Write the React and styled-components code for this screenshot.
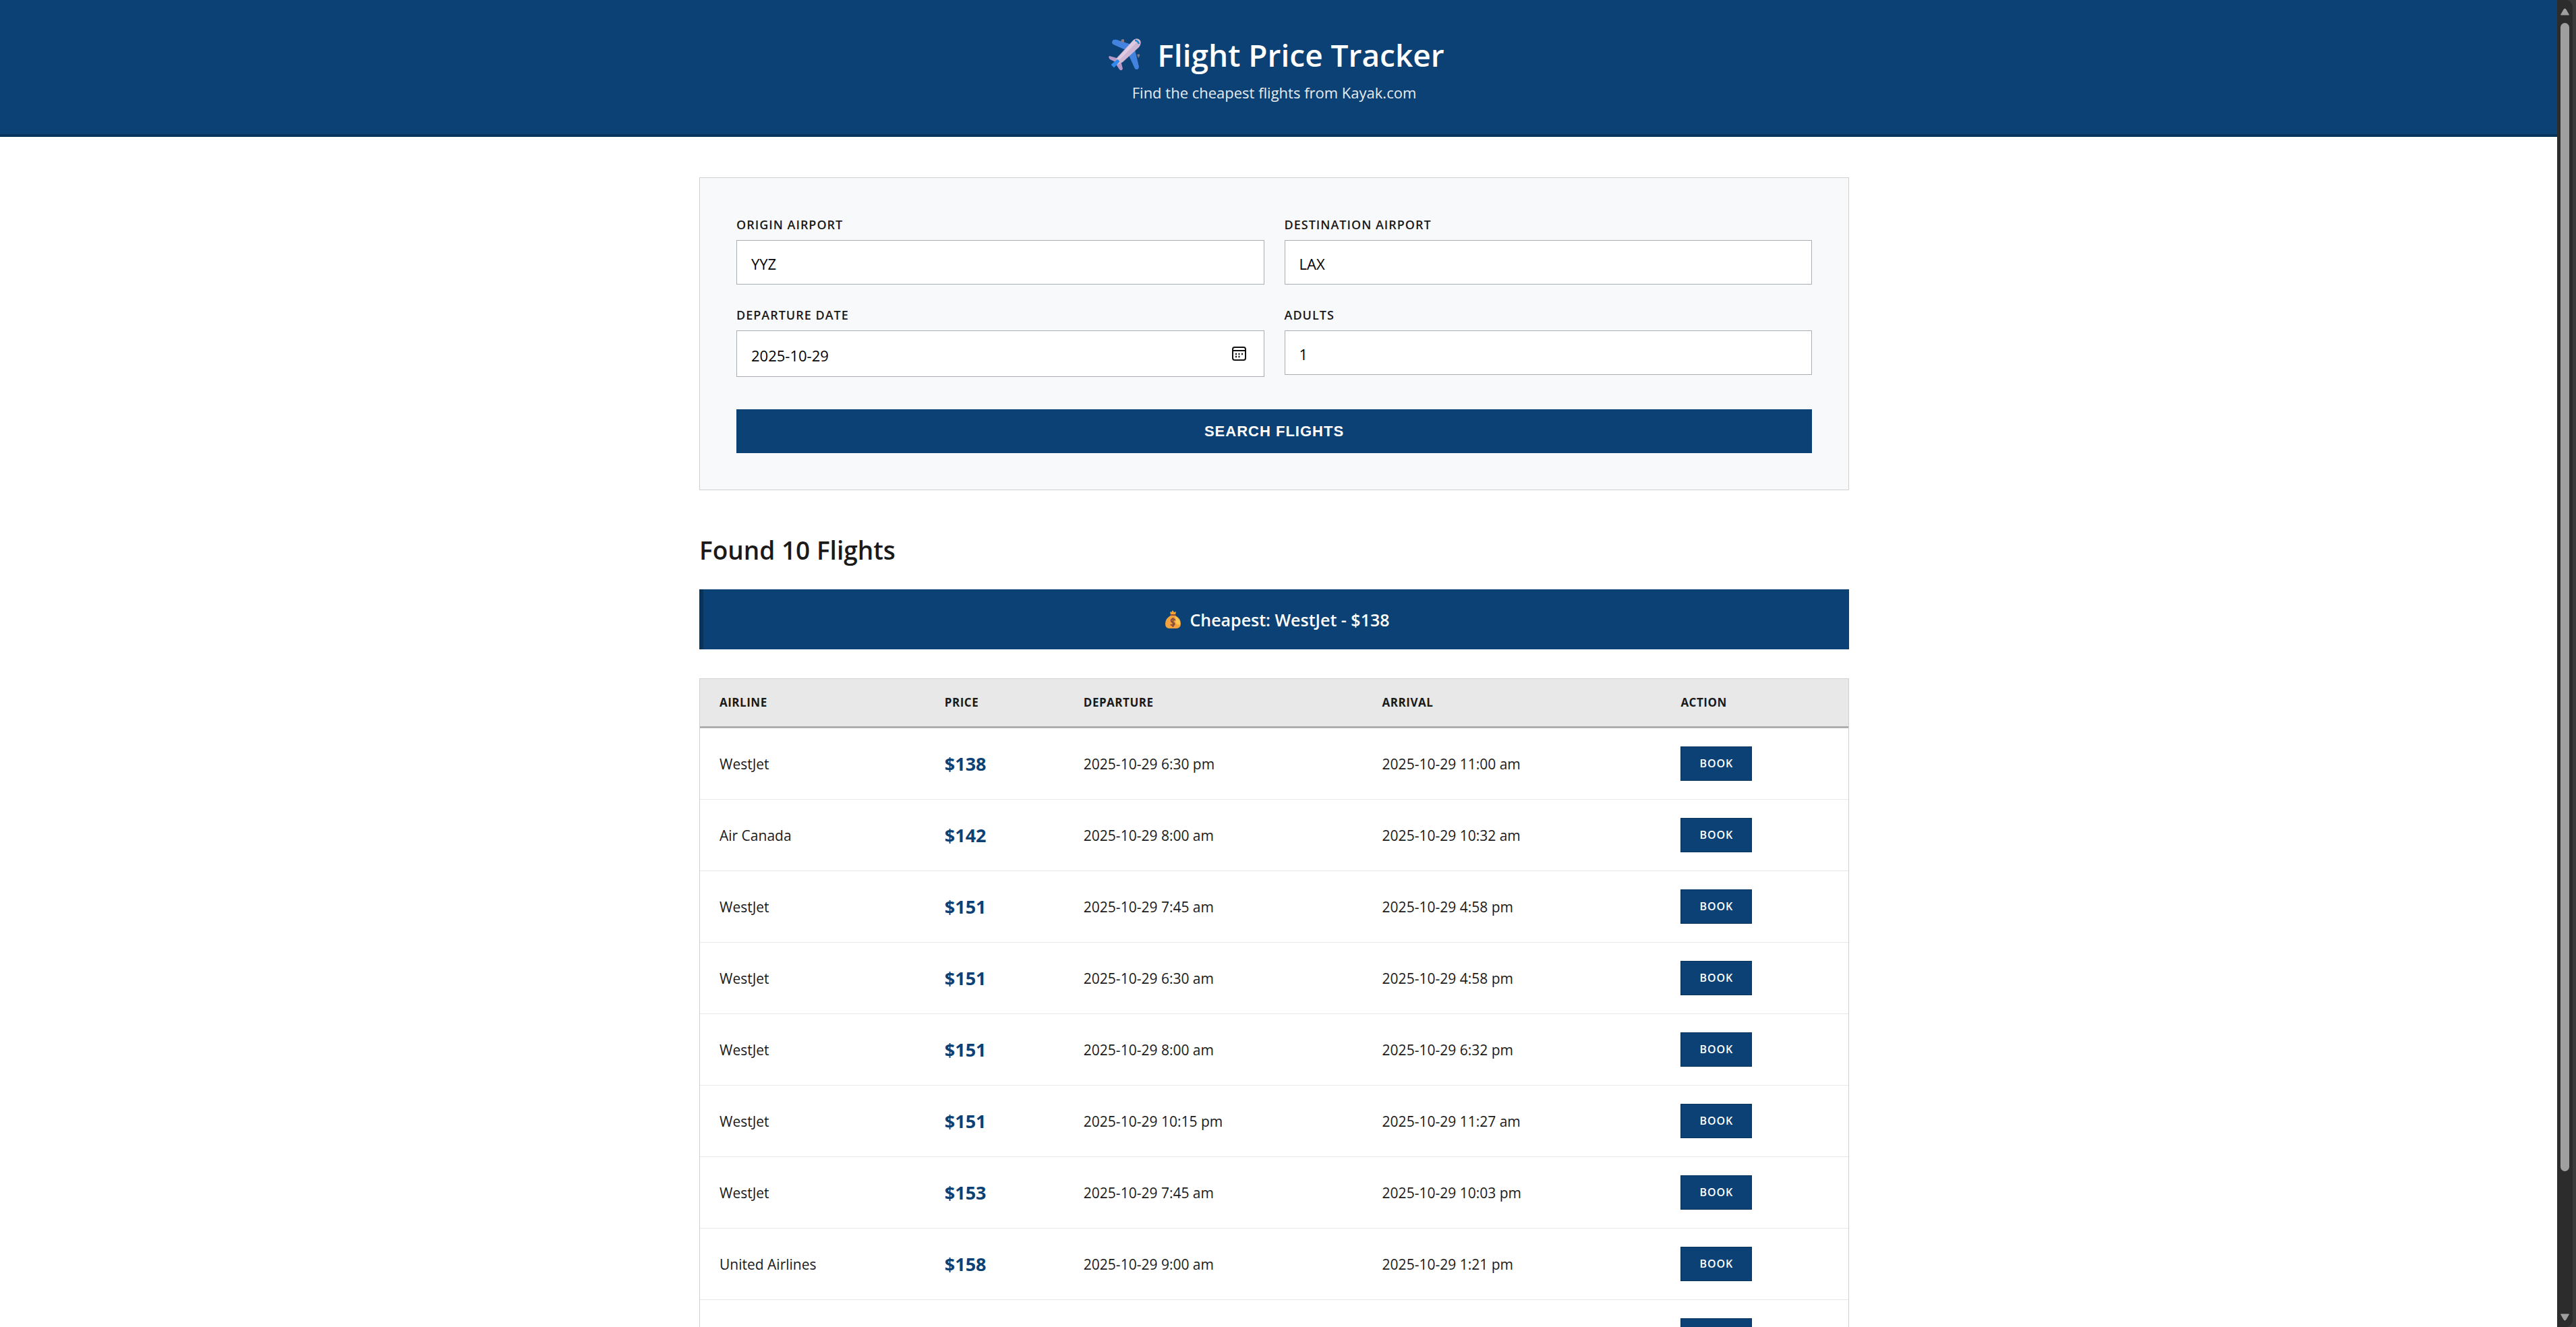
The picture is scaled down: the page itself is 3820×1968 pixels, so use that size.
import React, { useState } from "react";
import styled, { createGlobalStyle } from "styled-components";

const sans = '"Open Sans", "Noto Sans", sans-serif';
const navy = "#0b4174";
const navyDark = "#07345a";

const GlobalStyle = createGlobalStyle`
  *, *::before, *::after { box-sizing: border-box; }
  body { margin: 0; background: #fff; color: #1a1a1a; font-family: ${sans}; font-size: 21px; line-height: 32px; }
`;

const Shell = styled.div`
  display: flex;
  height: 100vh;
  overflow: hidden;
`;

const Page = styled.div`
  flex: 1;
  min-width: 0;
  height: 100%;
  overflow-y: auto;
  scrollbar-width: none;
`;

const Header = styled.header`
  padding: 45px 13px 50px 0;
  background: ${navy};
  border-bottom: 4px solid ${navyDark};
  color: #fff;
  text-align: center;
`;

const Title = styled.h1`
  display: flex;
  align-items: center;
  justify-content: center;
  gap: 23px;
  margin: 0 0 8px;
  font-size: 46px;
  line-height: 72px;
  font-weight: 600;
`;

const Tagline = styled.p`
  margin: 0;
  font-size: 22px;
  line-height: 24px;
  opacity: 0.9;
`;

const Content = styled.main`
  padding: 60px 13px 60px 0;
`;

const Container = styled.div`
  width: 100%;
  max-width: 1705px;
  margin: 0 auto;
`;

const SearchCard = styled.form`
  padding: 54px;
  background: #f8f9fb;
  border: 1px solid #d0d0d0;
`;

const FieldGrid = styled.div`
  display: grid;
  grid-template-columns: 1fr 1fr;
  gap: 30px;
  align-items: start;
  margin-bottom: 48px;
`;

const Label = styled.label`
  display: block;
  margin-bottom: 8px;
  font-size: 18px;
  line-height: 30px;
  font-weight: 600;
  letter-spacing: 1px;
  text-transform: uppercase;
`;

const InputBox = styled.div`
  display: flex;
  align-items: center;
  height: ${(p) => (p.$tall ? 69 : 66)}px;
  padding-right: 24px;
  background: #fff;
  border: 1px solid #aaadb1;
`;

const Input = styled.input`
  flex: 1;
  min-width: 0;
  height: 100%;
  padding: 4px 0 0 21px;
  border: 0;
  outline: 0;
  background: transparent;
  color: #000;
  font-family: ${sans};
  font-size: 22px;
`;

const PickerButton = styled.button`
  display: flex;
  padding: 2px;
  border: 0;
  background: none;
`;

const SearchButton = styled.button`
  display: block;
  width: 100%;
  height: 65px;
  border: 0;
  background: ${navy};
  color: #fff;
  font-family: "Liberation Sans", Arial, sans-serif;
  font-size: 22px;
  font-weight: 700;
  letter-spacing: 1px;
  text-transform: uppercase;
`;

const ResultsTitle = styled.h2`
  margin: 60px 0 30px;
  font-size: 37px;
  line-height: 57px;
  font-weight: 600;
`;

const Banner = styled.div`
  display: flex;
  align-items: center;
  justify-content: center;
  gap: 12px;
  height: 89px;
  margin-bottom: 43px;
  background: ${navy};
  border-left: 6px solid ${navyDark};
  color: #fff;
  font-size: 25px;
  font-weight: 600;
`;

const Table = styled.table`
  width: 100%;
  table-layout: fixed;
  border-spacing: 0;
  border: 1px solid #d0d0d0;
`;

const Col = styled.col`
  width: ${(p) => p.$share}%;
`;

const HeadCell = styled.th`
  height: 73px;
  padding: 0 29px;
  background: #e8e8e8;
  border-bottom: 3px solid #aeaeae;
  font-size: 17px;
  font-weight: 700;
  letter-spacing: 0.5px;
  text-align: left;
  text-transform: uppercase;
`;

const Cell = styled.td`
  height: 106px;
  padding: 0 29px;
  border-bottom: 1px solid #e8e8e8;
`;

const PriceCell = styled(Cell)`
  color: ${navy};
  font-size: 27px;
  font-weight: 700;
`;

const BookLink = styled.a`
  display: inline-block;
  padding: 0 27px;
  border: 1px solid ${navyDark};
  background: ${navy};
  color: #fff;
  font-size: 16px;
  line-height: 49px;
  font-weight: 600;
  letter-spacing: 1px;
  text-decoration: none;
  text-transform: uppercase;
  vertical-align: middle;
`;

const ScrollRail = styled.div`
  display: flex;
  flex: none;
  width: 28px;
  padding-right: 5px;
  background: #3b3b3b;
`;

const ScrollTrack = styled.div`
  display: flex;
  flex: 1;
  flex-direction: column;
  align-items: center;
  gap: 11px;
  padding: 12px 0 9px;
  border-radius: 0 10px 10px 0;
  background: #2c2c2c;
`;

const ScrollRoom = styled.div`
  display: flex;
  flex: 1;
  flex-direction: column;
`;

const Thumb = styled.div`
  flex: 0 0 89.5%;
  width: 13px;
  border-radius: 7px;
  background: #9f9f9f;
`;

const PlaneIcon = () => (
  <svg width="56" height="50" viewBox="-6 0 56 50" aria-hidden="true">
    <path d="M8 3 Q12 2 16 4 L38 11 L26 18 L8 10 Q4 7 8 3Z" fill="#4382de" />
    <path d="M39 14 L43 30 L46 43 Q45 49 40 46 L30 24Z" fill="#4382de" />
    <path d="M20 3 Q22 1 24 3 L24 7 L19 6Z M43 25 Q48 23 47 27 L45 30Z" fill="#887a80" />
    <path d="M13 30 L2 27 Q0 29 3 32 L11 36Z M15 36 L20 38 L22 46 Q20 50 17 47 L11 38Z" fill="#b898c8" />
    <path d="M38 3 Q44 -1 48 4 Q50 9 46 14 L22 36 Q15 41 11 39 Q9 36 13 30Z" fill="#cdb7d5" />
    <path d="M38 4 Q42 2 44 5 L20 30 Q14 34 13 32Z" fill="#decbe1" />
    <path d="M40 4 Q44 4 46 9" fill="none" stroke="#1b87cb" strokeWidth="2.500" />
    <path d="M6 40 L14 33 L16 35 L9 43Z" fill="#2f8bf0" stroke="#2f8bf0" strokeWidth="2" strokeLinejoin="round" />
  </svg>
);

const MoneyBagIcon = () => (
  <svg width="28" height="28" viewBox="-2 0 28 28" aria-hidden="true">
    <path d="M9 2 L11 3 L13 0 L15 3 L18 2 L17 7 L10 7Z" fill="#f3a435" />
    <path d="M10 6 H17 L18 9 H9Z" fill="#8c5142" />
    <path d="M10 8 H17 Q25 12 25 20 Q25 27 18 27 H8 Q2 27 2 20 Q2 12 10 8Z" fill="#f2a33d" />
    <path d="M17 9 Q25 13 24 21 Q20 23 17 18Z" fill="#fbc951" />
    <path d="M17 15 Q13 11 11 14 Q10 17 13 18 Q17 19 15 22 Q13 24 10 21 M13.500 11 V25" fill="none" stroke="#8a4d3f" strokeWidth="2" />
  </svg>
);

const CalendarIcon = () => (
  <svg width="21" height="21" viewBox="0 0 21 21" fill="none" stroke="#111" strokeWidth="2" aria-hidden="true">
    <rect x="1" y="1" width="19" height="19" rx="3" />
    <path d="M1 6 H20" />
    <path d="M5 11 h2 M9.500 11 h2 M14 11 h2 M5 15 h2 M9.500 15 h2" strokeWidth="2.500" />
  </svg>
);

const Arrow = ({ down }) => (
  <svg width="15" height="11" viewBox="0 0 15 11" aria-hidden="true">
    <path
      d={down ? "M1.500 1 H13.500 L9 9 Q7.500 11 6 9Z" : "M1.500 10 H13.500 L9 2 Q7.500 0 6 2Z"}
      fill="#9f9f9f" stroke="#9f9f9f" strokeLinejoin="round"
    />
  </svg>
);

const columns = [
  ["Airline", 19.6],
  ["Price", 12.1],
  ["Departure", 26],
  ["Arrival", 26],
  ["Action", 16.3],
];

const flights = [
  ["WestJet", 138, "6:30 pm", "11:00 am"],
  ["Air Canada", 142, "8:00 am", "10:32 am"],
  ["WestJet", 151, "7:45 am", "4:58 pm"],
  ["WestJet", 151, "6:30 am", "4:58 pm"],
  ["WestJet", 151, "8:00 am", "6:32 pm"],
  ["WestJet", 151, "10:15 pm", "11:27 am"],
  ["WestJet", 153, "7:45 am", "10:03 pm"],
  ["United Airlines", 158, "9:00 am", "1:21 pm"],
  ["United Airlines", 158, "10:00 am", "2:40 pm"],
  ["Air Canada", 162, "11:30 am", "1:55 pm"],
];

const fields = [
  { id: "origin", label: "Origin Airport" },
  { id: "destination", label: "Destination Airport" },
  { id: "date", label: "Departure Date", picker: true },
  { id: "adults", label: "Adults" },
];

export default function App() {
  const [query, setQuery] = useState({
    origin: "YYZ",
    destination: "LAX",
    date: "2025-10-29",
    adults: "1",
  });

  return (
    <Shell>
      <GlobalStyle />
      <Page>
        <Header>
          <Title><PlaneIcon />Flight Price Tracker</Title>
          <Tagline>Find the cheapest flights from Kayak.com</Tagline>
        </Header>
        <Content>
          <Container>
            <SearchCard onSubmit={(e) => e.preventDefault()}>
              <FieldGrid>
                {fields.map(({ id, label, picker }) => (
                  <div key={id}>
                    <Label htmlFor={id}>{label}</Label>
                    <InputBox $tall={picker}>
                      <Input
                        id={id}
                        value={query[id]}
                        onChange={(e) => setQuery({ ...query, [id]: e.target.value })}
                      />
                      {picker && (
                        <PickerButton type="button" aria-label="Open calendar">
                          <CalendarIcon />
                        </PickerButton>
                      )}
                    </InputBox>
                  </div>
                ))}
              </FieldGrid>
              <SearchButton type="submit">Search Flights</SearchButton>
            </SearchCard>

            <ResultsTitle>Found {flights.length} Flights</ResultsTitle>
            <Banner><MoneyBagIcon />Cheapest: WestJet - $138</Banner>

            <Table>
              <colgroup>
                {columns.map(([name, share]) => <Col key={name} $share={share} />)}
              </colgroup>
              <thead>
                <tr>
                  {columns.map(([name]) => <HeadCell key={name} scope="col">{name}</HeadCell>)}
                </tr>
              </thead>
              <tbody>
                {flights.map(([airline, price, departs, arrives], i) => (
                  <tr key={i}>
                    <Cell>{airline}</Cell>
                    <PriceCell>${price}</PriceCell>
                    <Cell>2025-10-29 {departs}</Cell>
                    <Cell>2025-10-29 {arrives}</Cell>
                    <Cell><BookLink href="#book">Book</BookLink></Cell>
                  </tr>
                ))}
              </tbody>
            </Table>
          </Container>
        </Content>
      </Page>
      <ScrollRail aria-hidden="true">
        <ScrollTrack>
          <Arrow />
          <ScrollRoom><Thumb /></ScrollRoom>
          <Arrow down />
        </ScrollTrack>
      </ScrollRail>
    </Shell>
  );
}
